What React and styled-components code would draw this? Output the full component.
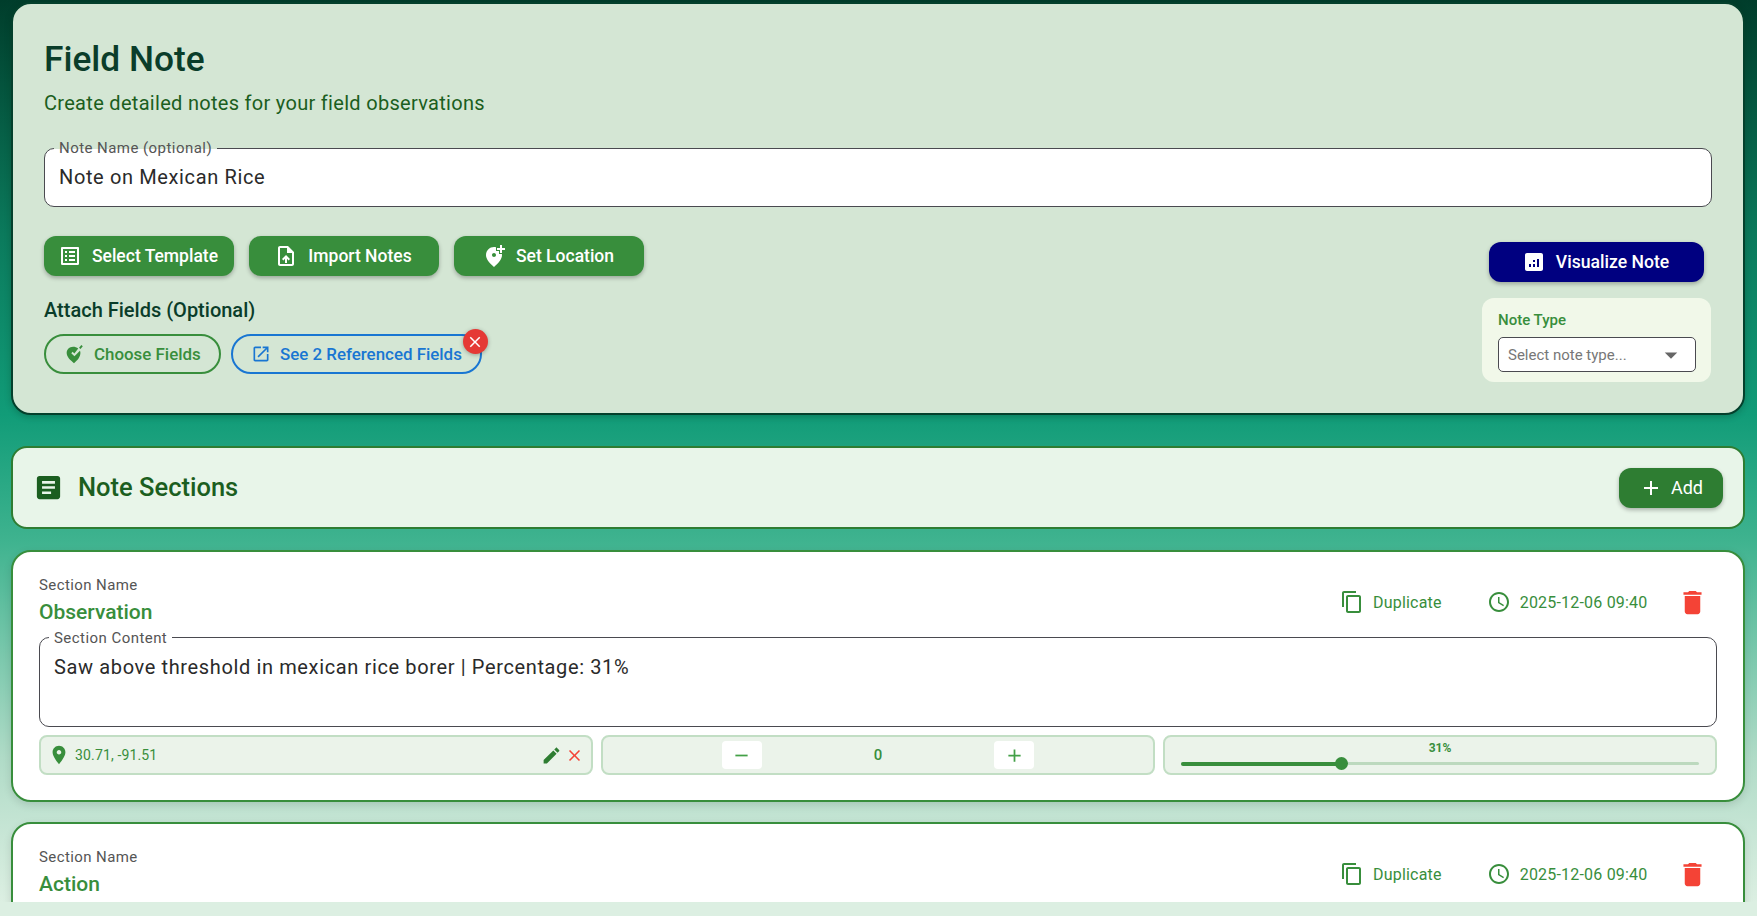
import React from 'react';
import styled, { createGlobalStyle } from 'styled-components';

const P = {
  listAlt: 'M19 5v14H5V5h14m1.1-2H3.9c-.5 0-.9.4-.9.9v16.2c0 .4.4.9.9.9h16.2c.4 0 .9-.5.9-.9V3.9c0-.5-.5-.9-.9-.9zM11 7h6v2h-6V7zm0 4h6v2h-6v-2zm0 4h6v2h-6zM7 7h2v2H7zm0 4h2v2H7zm0 4h2v2H7z',
  upload: 'M14 2H6c-1.1 0-1.99.9-1.99 2L4 20c0 1.1.89 2 1.99 2H18c1.1 0 2-.9 2-2V8l-6-6zm4 18H6V4h7v5h5v11zM8 15.01l1.41 1.41L11 14.84V19h2v-4.16l1.59 1.59L16 15.01 12.01 11 8 15.01z',
  addLoc: 'M20 1v3h3v2h-3v3h-2V6h-3V4h3V1h2zm-8 12c1.1 0 2-.9 2-2s-.9-2-2-2-2 .9-2 2 .9 2 2 2zm2-9.75V7h3v3h2.92c.05.39.08.79.08 1.2 0 3.32-2.67 7.25-8 11.8-5.33-4.55-8-8.48-8-11.8C4 6.22 7.8 3 12 3c.68 0 1.35.08 2 .25z',
  open: 'M19 19H5V5h7V3H5c-1.11 0-2 .9-2 2v14c0 1.1.89 2 2 2h14c1.1 0 2-.9 2-2v-7h-2v7zM14 3v2h3.59l-9.83 9.83 1.41 1.41L19 6.41V10h2V3h-7z',
  close: 'M19 6.41 17.59 5 12 10.59 6.41 5 5 6.41 10.59 12 5 17.59 6.41 19 12 13.41 17.59 19 19 17.59 13.41 12z',
  analytics: 'M19 3H5c-1.1 0-2 .9-2 2v14c0 1.1.9 2 2 2h14c1.1 0 2-.9 2-2V5c0-1.1-.9-2-2-2zM9 17H7v-3h2v3zm4 0h-2v-3h2v3zm0-5h-2v-2h2v2zm4 5h-2V9h2v8z',
  article: 'M19 3H5c-1.1 0-2 .9-2 2v14c0 1.1.9 2 2 2h14c1.1 0 2-.9 2-2V5c0-1.1-.9-2-2-2zm-5 14H7v-2h7v2zm3-4H7v-2h10v2zm0-4H7V7h10v2z',
  add: 'M19 13h-6v6h-2v-6H5v-2h6V5h2v6h6v2z',
  copy: 'M16 1H4c-1.1 0-2 .9-2 2v14h2V3h12V1zm3 4H8c-1.1 0-2 .9-2 2v14c0 1.1.9 2 2 2h11c1.1 0 2-.9 2-2V7c0-1.1-.9-2-2-2zm0 16H8V7h11v14z',
  clock: 'M11.99 2C6.47 2 2 6.48 2 12s4.47 10 9.99 10C17.52 22 22 17.52 22 12S17.52 2 11.99 2zM12 20c-4.42 0-8-3.58-8-8s3.58-8 8-8 8 3.58 8 8-3.58 8-8 8zm.5-13H11v6l5.25 3.15.75-1.23-4.5-2.67z',
  del: 'M6 19c0 1.1.9 2 2 2h8c1.1 0 2-.9 2-2V7H6v12zM19 4h-3.5l-1-1h-5l-1 1H5v2h14V4z',
  pin: 'M12 2C8.13 2 5 5.13 5 9c0 5.25 7 13 7 13s7-7.75 7-13c0-3.87-3.13-7-7-7zm0 9.5c-1.38 0-2.5-1.12-2.5-2.5s1.12-2.5 2.5-2.5 2.5 1.12 2.5 2.5-1.12 2.5-2.5 2.5z',
  edit: 'M3 17.25V21h3.75L17.81 9.94l-3.75-3.75L3 17.25zM20.71 7.04c.39-.39.39-1.02 0-1.41l-2.34-2.34c-.39-.39-1.02-.39-1.41 0l-1.83 1.83 3.75 3.75 1.83-1.83z',
  minus: 'M19 13H5v-2h14v2z',
  choose: 'M11 4C7 4 4 7 4 11c0 4 4 8 8 11 4-3 7-7 7-11 0-1-.2-1.7-.5-2.5L12.5 14.5 9 11.2l1.5-1.6 1.9 1.8 4.2-5.5C15 4.7 13 4 11 4zM20 2.2l1.6 1.3-2.5 3-1.6-1.3 2.5-3z',
  caret: 'M7 10l5 5 5-5z',
};

const Icon = ({ d, size = 24, color = 'currentColor' }) => (
  <IconSvg viewBox="0 0 24 24" width={size} height={size} fill={color} aria-hidden="true">
    <path d={d} />
  </IconSvg>
);

const Global = createGlobalStyle`
  html, body { margin: 0; padding: 0; height: 916px; overflow: hidden; background: #dcefe2; }
  body { font-family: Roboto, "Noto Sans", sans-serif; }
  * { box-sizing: border-box; }
`;

const IconSvg = styled.svg`flex: none; display: block;`;

const Viewport = styled.main`
  height: 902px;
  overflow: hidden;
  padding: 2px 12px 0 11px;
  background: linear-gradient(180deg, #003d2b 0%, #0b7a5c 26%, #119c78 46%, #3fb38f 60%, #b0dbc7 84%, #dcefe2 100%);
`;

const HeaderCard = styled.section`
  height: 413px;
  border-radius: 20px;
  background: #d4e6d4;
  border: 2px solid #04402c;
  box-shadow: 0 2px 6px rgba(0, 40, 25, 0.25);
  padding: 32px 31px 0 31px;
`;

const Title = styled.h1`
  margin: 0;
  font-size: 35.3px;
  line-height: 46px;
  font-weight: 500;
  color: #0a3d2a;
`;

const Subtitle = styled.p`
  margin: 7px 0 0;
  font-size: 20px;
  line-height: 28px;
  letter-spacing: 0.3px;
  color: #1b5e20;
`;

const OutlinedField = styled.div`
  position: relative;
  margin-top: ${p => p.$mt || 0}px;
  height: ${p => p.$h}px;
  background: #fff;
  border: 1px solid #4a4a50;
  border-radius: 10px;
  padding: ${p => p.$padTop}px 14px 0;
  font-size: 20px;
  line-height: 28px;
  letter-spacing: 0.63px;
  color: #2a2a2a;
`;

const FloatLabel = styled.span`
  position: absolute;
  top: ${p => p.$y}px;
  left: 9px;
  padding: 0 5px;
  font-size: 15px;
  line-height: 17px;
  letter-spacing: 0.45px;
  color: #555;
  background: linear-gradient(180deg, ${p => p.$top} 50%, #fff 50%);
`;

const ToolRow = styled.div`
  display: flex;
  justify-content: space-between;
  margin-top: 29px;
`;

const LeftTools = styled.div`
  display: flex;
  flex-direction: column;
`;

const ButtonRow = styled.div`
  display: flex;
  gap: 15px;
`;

const GreenButton = styled.button`
  width: 190px;
  height: 40px;
  display: flex;
  align-items: center;
  justify-content: center;
  gap: 10px;
  padding: 0 2px 0 0;
  border: 0;
  border-radius: 12px;
  background: #388e3c;
  color: #fff;
  font: 500 17.5px/24px Roboto, sans-serif;
  box-shadow: 0 2px 4px rgba(0, 0, 0, 0.28);
`;

const AttachTitle = styled.h2`
  margin: 20px 0 0;
  font-size: 20px;
  line-height: 28px;
  font-weight: 500;
  color: #0a3d2a;
`;

const PillRow = styled.div`
  display: flex;
  gap: 10px;
  margin-top: 10px;
`;

const Pill = styled.button`
  position: relative;
  height: 40px;
  width: ${p => p.$w}px;
  display: flex;
  align-items: center;
  gap: 9px;
  padding: 0 0 0 ${p => p.$pl}px;
  border: 2px solid ${p => p.$color};
  border-radius: 20px;
  background: transparent;
  color: ${p => p.$color};
  font: 500 16.9px/24px Roboto, sans-serif;
  white-space: nowrap;
`;

const ClearBadge = styled.span`
  position: absolute;
  top: -7px;
  right: -7.5px;
  width: 25px;
  height: 25px;
  border-radius: 50%;
  background: #e53935;
  color: #fff;
  display: flex;
  align-items: center;
  justify-content: center;
  box-shadow: 0 1px 4px rgba(0, 0, 0, 0.3);
`;

const RightTools = styled.div`
  width: 229px;
  margin-right: 1px;
  display: flex;
  flex-direction: column;
  align-items: center;
  padding-top: 6px;
`;

const NavyButton = styled(GreenButton)`
  width: 215px;
  background: #000080;
  font-size: 17.6px;
  gap: 10px;
`;

const TypeBox = styled.div`
  width: 229px;
  height: 84px;
  margin-top: 16px;
  padding: 13px 15px 0 16px;
  border-radius: 12px;
  background: #f1f8e9;
`;

const TypeLabel = styled.div`
  font-size: 15px;
  line-height: 19px;
  font-weight: 500;
  color: #388e3c;
`;

const SelectBox = styled.div`
  height: 35px;
  margin-top: 7px;
  display: flex;
  align-items: center;
  justify-content: space-between;
  padding: 0 9px 0 9px;
  background: #fff;
  border: 1px solid #4a4a50;
  border-radius: 5px;
  font-size: 15px;
  color: #777;
`;

const SectionsBar = styled.section`
  height: 83px;
  margin-top: 31px;
  display: flex;
  align-items: center;
  padding: 0 20px 0 20px;
  background: #e8f5e9;
  border: 2px solid #2e7d32;
  border-radius: 16px;
`;

const SectionsTitle = styled.h2`
  flex: 1;
  margin: 0 0 1px 14px;
  font-size: 25.5px;
  line-height: 36px;
  font-weight: 500;
  color: #1b5e20;
`;

const AddButton = styled(GreenButton)`
  width: 104px;
  padding: 0;
  background: #2e7d32;
  font-size: 18px;
  font-weight: 400;
  gap: 8px;
`;

const SectionCard = styled.article`
  height: 252px;
  margin-top: ${p => p.$mt}px;
  padding: 0 26px;
  background: #fff;
  border: 2px solid #388e3c;
  border-radius: 20px;
  box-shadow: 0 3px 8px rgba(0, 0, 0, 0.12);
`;

const SectionHead = styled.div`
  display: flex;
  align-items: center;
  justify-content: space-between;
  height: 85px;
  padding-top: 11px;
`;

const NameBlock = styled.div`
  display: flex;
  flex-direction: column;
`;

const NameLabel = styled.span`
  font-size: 15px;
  line-height: 20px;
  letter-spacing: 0.4px;
  color: #555;
`;

const NameValue = styled.span`
  margin-top: 3px;
  font-size: 21px;
  line-height: 28px;
  font-weight: 500;
  color: #388e3c;
`;

const HeadActions = styled.div`
  display: flex;
  align-items: center;
  margin-top: 4px;
  margin-right: 9px;
  color: #388e3c;
  font-size: 16px;
  letter-spacing: 0.2px;
`;

const HeadAction = styled.span`
  display: flex;
  align-items: center;
  gap: 9px;
  margin-right: ${p => p.$mr}px;
`;

const MetaRow = styled.div`
  display: grid;
  grid-template-columns: repeat(3, 1fr);
  gap: 8px;
  margin-top: 8px;
`;

const MetaCell = styled.div`
  position: relative;
  height: 40px;
  display: flex;
  align-items: center;
  background: #ebf3ea;
  border: 2px solid #c2dec4;
  border-radius: 8px;
  color: #388e3c;
`;

const LocCell = styled(MetaCell)`
  padding: 0 7px 0 7px;
  gap: 5px;
  font-size: 14px;
  letter-spacing: 0.15px;
`;

const LocText = styled.span`flex: 1;`;

const LocActions = styled.span`
  display: flex;
  align-items: center;
  gap: 3px;
`;

const CounterCell = styled(MetaCell)`
  justify-content: center;
  gap: 112px;
  font-size: 15px;
  font-weight: 500;
`;

const StepButton = styled.span`
  width: 40px;
  height: 28px;
  display: flex;
  align-items: center;
  justify-content: center;
  background: #fff;
  border-radius: 4px;
`;

const SliderCell = styled(MetaCell)`
  flex-direction: column;
  align-items: stretch;
  padding: 4px 16px 0;
`;

const SliderValue = styled.span`
  text-align: center;
  font-size: 12px;
  line-height: 14px;
  font-weight: 700;
`;

const Track = styled.div`
  position: relative;
  height: 3px;
  margin-top: 7px;
  border-radius: 2px;
  background: #bcd9be;
`;

const TrackFill = styled.div`
  height: 4px;
  margin-top: -0.5px;
  border-radius: 2px;
  background: #388e3c;
`;

const Thumb = styled.span`
  position: absolute;
  top: -5px;
  width: 13px;
  height: 13px;
  margin-left: -6.5px;
  border-radius: 50%;
  background: #388e3c;
`;

const Head = ({ name }) => (
  <SectionHead>
    <NameBlock>
      <NameLabel>Section Name</NameLabel>
      <NameValue>{name}</NameValue>
    </NameBlock>
    <HeadActions>
      <HeadAction $mr={45}><Icon d={P.copy} />Duplicate</HeadAction>
      <HeadAction $mr={29.5}><Icon d={P.clock} />2025-12-06 09:40</HeadAction>
      <Icon d={P.del} size={31} color="#f44336" />
    </HeadActions>
  </SectionHead>
);

export default function App() {
  const pct = 31;
  return (
    <Viewport>
      <Global />
      <HeaderCard>
        <Title>Field Note</Title>
        <Subtitle>Create detailed notes for your field observations</Subtitle>
        <OutlinedField $mt={31} $h={59} $padTop={14}>
          <FloatLabel $top="#d4e6d4" $y={-9}>Note Name (optional)</FloatLabel>
          Note on Mexican Rice
        </OutlinedField>
        <ToolRow>
          <LeftTools>
            <ButtonRow>
              <GreenButton><Icon d={P.listAlt} size={24} />Select Template</GreenButton>
              <GreenButton><Icon d={P.upload} size={24} />Import Notes</GreenButton>
              <GreenButton><Icon d={P.addLoc} size={24} />Set Location</GreenButton>
            </ButtonRow>
            <AttachTitle>Attach Fields (Optional)</AttachTitle>
            <PillRow>
              <Pill $color="#388e3c" $w={177} $pl={17}><Icon d={P.choose} size={22} />Choose Fields</Pill>
              <Pill $color="#1976d2" $w={251} $pl={18}>
                <Icon d={P.open} size={20} />See 2 Referenced Fields
                <ClearBadge><Icon d={P.close} size={18} /></ClearBadge>
              </Pill>
            </PillRow>
          </LeftTools>
          <RightTools>
            <NavyButton><Icon d={P.analytics} size={24} />Visualize Note</NavyButton>
            <TypeBox>
              <TypeLabel>Note Type</TypeLabel>
              <SelectBox>Select note type...<Icon d={P.caret} size={30} color="#666" /></SelectBox>
            </TypeBox>
          </RightTools>
        </ToolRow>
      </HeaderCard>

      <SectionsBar>
        <Icon d={P.article} size={31} color="#1b5e20" />
        <SectionsTitle>Note Sections</SectionsTitle>
        <AddButton><Icon d={P.add} size={24} />Add</AddButton>
      </SectionsBar>

      <SectionCard $mt={21}>
        <Head name="Observation" />
        <OutlinedField $h={90} $padTop={15}>
          <FloatLabel $top="#fff" $y={-8}>Section Content</FloatLabel>
          Saw above threshold in mexican rice borer | Percentage: 31%
        </OutlinedField>
        <MetaRow>
          <LocCell>
            <Icon d={P.pin} size={22} />
            <LocText>30.71, -91.51</LocText>
            <LocActions>
              <Icon d={P.edit} size={21} color="#2e7d32" />
              <Icon d={P.close} size={19} color="#f44336" />
            </LocActions>
          </LocCell>
          <CounterCell>
            <StepButton><Icon d={P.minus} size={21} color="#43a047" /></StepButton>
            0
            <StepButton><Icon d={P.add} size={21} color="#43a047" /></StepButton>
          </CounterCell>
          <SliderCell>
            <SliderValue>{pct}%</SliderValue>
            <Track>
              <TrackFill style={{ width: `${pct}%` }} />
              <Thumb style={{ left: `${pct}%` }} />
            </Track>
          </SliderCell>
        </MetaRow>
      </SectionCard>

      <SectionCard $mt={20}>
        <Head name="Action" />
      </SectionCard>
    </Viewport>
  );
}
